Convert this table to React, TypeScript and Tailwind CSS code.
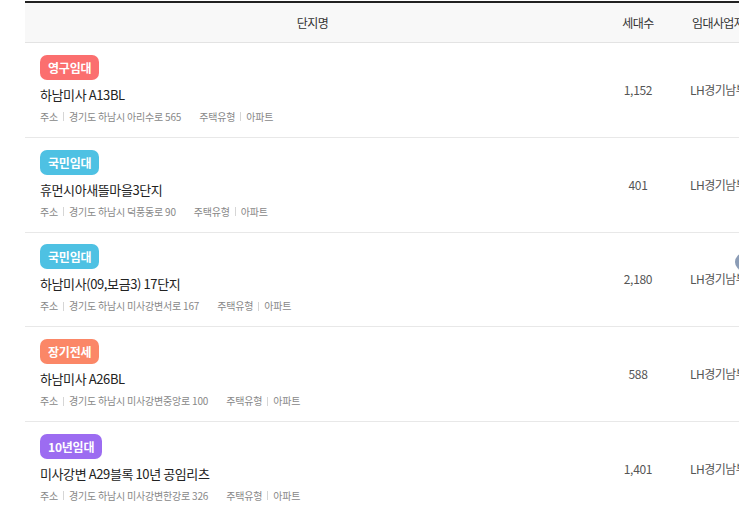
const rows = [
  { tag: "영구임대", color: "bg-[#fb6f6f]", name: "하남미사 A13BL", addr: "경기도 하남시 아리수로 565", count: "1,152" },
  { tag: "국민임대", color: "bg-[#4ec1e3]", name: "휴먼시아새뜰마을3단지", addr: "경기도 하남시 덕풍동로 90", count: "401" },
  { tag: "국민임대", color: "bg-[#4ec1e3]", name: "하남미사(09,보금3) 17단지", addr: "경기도 하남시 미사강변서로 167", count: "2,180" },
  { tag: "장기전세", color: "bg-[#fb8767]", name: "하남미사 A26BL", addr: "경기도 하남시 미사강변중앙로 100", count: "588" },
  { tag: "10년임대", color: "bg-[#9c6cf1]", name: "미사강변 A29블록 10년 공임리츠", addr: "경기도 하남시 미사강변한강로 326", count: "1,401" },
];

export default function App() {
  return (
    <div
      className="relative h-[511px] w-[739px] overflow-hidden bg-white"
      style={{ fontFamily: '"Noto Sans CJK KR", "Noto Sans", sans-serif' }}
    >
      <div className="ml-[25px] mt-px w-[840px] border-t-2 border-[#222]">
        <div className="grid h-[40px] grid-cols-[575px_76px_1fr] items-center border-b border-[#e3e3e3] bg-[#f8f8f8] text-[12px] tracking-[-0.6px] text-[#333]">
          <div className="text-center">단지명</div>
          <div className="text-center">세대수</div>
          <div className="pl-[16px]">임대사업자</div>
        </div>
        {rows.map((r, i) => (
          <div
            key={i}
            className="grid h-[94.75px] grid-cols-[575px_76px_1fr] items-center border-b border-[#e8e8e8]"
          >
            <div className="flex flex-col items-start pb-[1px] pl-[15px]">
              <span
                className={`${r.color} rounded-[7px] px-[8px] py-[4px] text-[12px] font-bold leading-[17px] tracking-[-0.2px] text-white`}
              >
                {r.tag}
              </span>
              <div className="mt-[6px] text-[13px] leading-[18px] tracking-[-0.4px] text-[#222]">{r.name}</div>
              <div className="mt-[6px] flex items-center text-[10px] leading-[14px] tracking-[-0.2px] text-[#888]">
                <span>주소</span>
                <span className="mx-[5px] h-[9px] w-px bg-[#d6d6d6]" />
                <span>{r.addr}</span>
                <span className="ml-[18px]">주택유형</span>
                <span className="mx-[5px] h-[9px] w-px bg-[#d6d6d6]" />
                <span>아파트</span>
              </div>
            </div>
            <div className="text-center text-[12px] tracking-[-0.3px] text-[#555]">{r.count}</div>
            <div className="pl-[14px] text-[12px] tracking-[-0.5px] text-[#555]">LH경기남부지역본부</div>
          </div>
        ))}
      </div>
      <div className="absolute left-[735px] top-[253px] h-[18px] w-[18px] rounded-full bg-[#8b9cb6]" />
    </div>
  );
}
